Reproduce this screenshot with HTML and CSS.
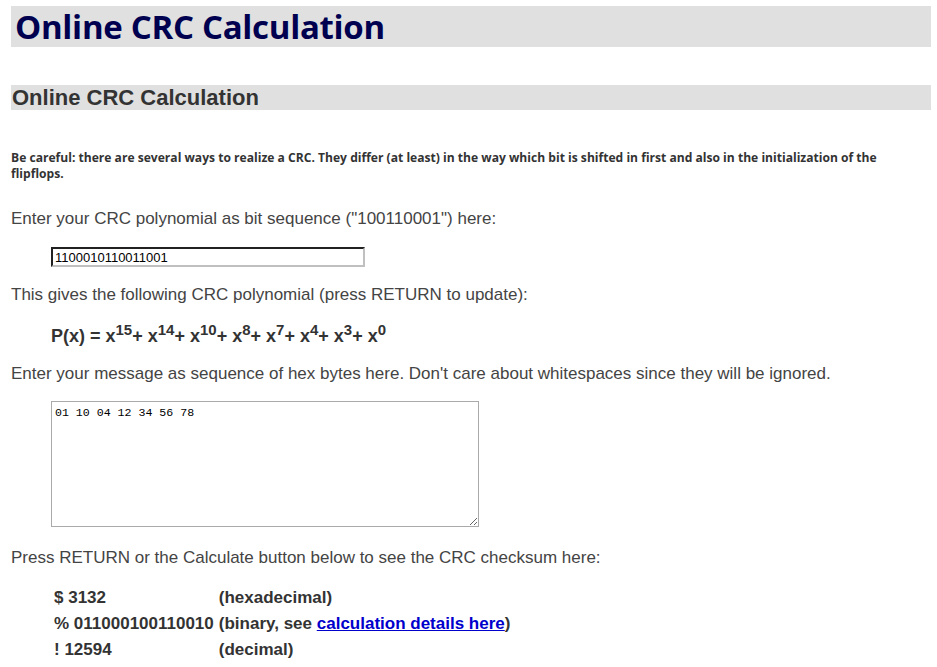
FILE: index.html
```html
<!DOCTYPE html>
<html lang="en">
<head>
    <meta charset="UTF-8">
    <title>Online CRC Calculation</title>
    <link rel="stylesheet" href="styles.css">
</head>
<body>
    <h1 class="title">Online CRC Calculation</h1>

    <h2 class="subtitle">Online CRC Calculation</h2>

    <p class="warning">Be careful: there are several ways to realize a CRC. They differ (at least) in the way which bit is shifted in first and also in the initialization of the flipflops.</p>

    <p class="text first">Enter your CRC polynomial as bit sequence ("100110001") here:</p>
    <div class="indent poly-box">
        <input type="text" class="poly-input" value="1100010110011001">
    </div>

    <p class="text">This gives the following CRC polynomial (press RETURN to update):</p>
    <p class="poly">P(x) = x<sup>15</sup>+ x<sup>14</sup>+ x<sup>10</sup>+ x<sup>8</sup>+ x<sup>7</sup>+ x<sup>4</sup>+ x<sup>3</sup>+ x<sup>0</sup></p>

    <p class="text">Enter your message as sequence of hex bytes here. Don't care about whitespaces since they will be ignored.</p>
    <div class="indent msg-box">
        <textarea class="message">01 10 04 12 34 56 78</textarea>
    </div>

    <p class="text after-msg">Press RETURN or the Calculate button below to see the CRC checksum here:</p>
    <table class="result">
        <tr><td>$ 3132</td><td>(hexadecimal)</td></tr>
        <tr><td>% 011000100110010</td><td>(binary, see <a href="#">calculation details here</a>)</td></tr>
        <tr><td>! 12594</td><td>(decimal)</td></tr>
    </table>
</body>
</html>
```

FILE: styles.css
```css
body {
    margin: 6px 6px 0 11px;
    font-family: "Liberation Sans", Arial, sans-serif;
    font-size: 17px;
    color: #444;
    background: #fff;
}
.title {
    margin: 0;
    background: #e0e0e0;
    color: #000050;
    font-family: "Open Sans", sans-serif;
    font-weight: bold;
    font-size: 33px;
    line-height: 41px;
    height: 41px;
    padding-left: 4px;
    letter-spacing: -0.3px;
}
.subtitle {
    margin: 38px 0 0 0;
    background: #e0e0e0;
    color: #333;
    font-size: 22px;
    line-height: 25px;
    height: 25px;
    padding-left: 1px;
}
.warning {
    margin: 40px 0 0 0;
    font-family: "Open Sans", sans-serif;
    font-weight: bold;
    font-size: 12.1px;
    line-height: 16px;
    color: #333;
}
.text {
    margin: 18px 0 0 0;
    line-height: 20px;
}
.text.first {
    margin-top: 27px;
}
.text.after-msg {
    margin-top: 21px;
}
.indent {
    margin: 20px 0 0 40px;
}
.poly-box {
    margin-top: 18px;
}
.msg-box {
    margin-top: 17px;
}
.poly-input {
    display: block;
    width: 306px;
    height: 14px;
    padding: 1px 2px;
    margin: 0;
    border: 2px inset #c0c0c0;
    border-top-color: #767676;
    border-left-color: #767676;
    font-family: "Liberation Sans", Arial, sans-serif;
    font-size: 13px;
    color: #000;
}
.poly {
    margin: 21px 0 0 40px;
    font-size: 18px;
    font-weight: bold;
    color: #333;
    line-height: 20px;
}
.poly sup {
    font-size: 15px;
    line-height: 0;
}
.message {
    display: block;
    width: 420px;
    height: 116px;
    margin: 0;
    padding: 4px 3px;
    border: 1px solid #aaa;
    font-family: "Liberation Mono", monospace;
    font-size: 11.6px;
    color: #000;
    resize: both;
}
.result {
    margin: 17px 0 0 40px;
    border-collapse: collapse;
    font-weight: bold;
    color: #333;
}
.result td {
    padding: 3px 2px 3px 3px;
    height: 20px;
    line-height: 20px;
}
.result a {
    color: #0000cc;
}
```
